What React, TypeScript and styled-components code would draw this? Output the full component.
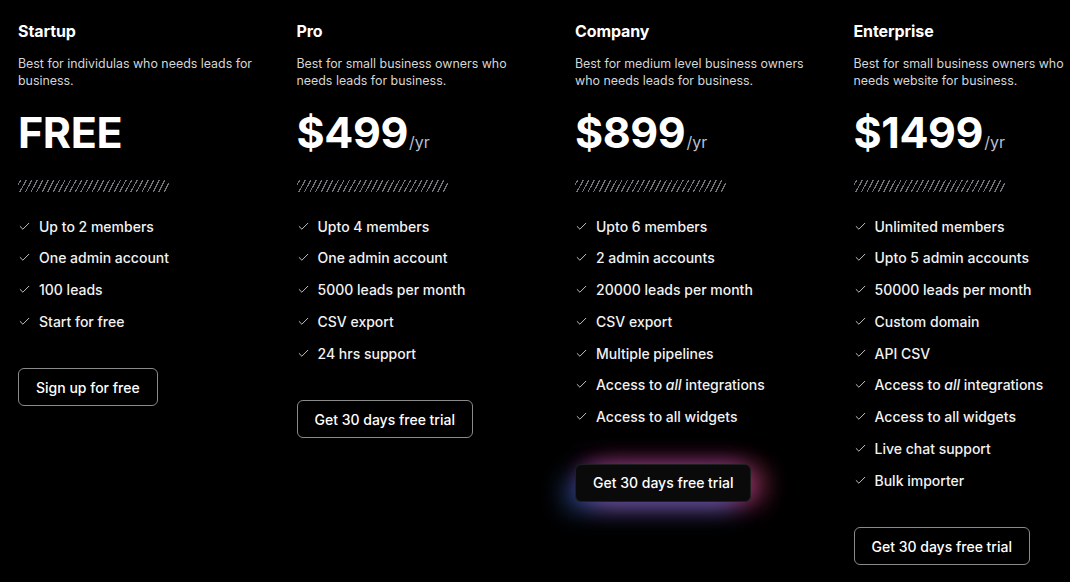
import React from "react";
import styled, { createGlobalStyle, css } from "styled-components";
import { Check } from "lucide-react";

const GlobalStyle = createGlobalStyle`
  html, body {
    margin: 0;
    background: #000;
    overflow: hidden;
  }
  body {
    font-family: Inter, "Noto Sans", sans-serif;
    color: #fff;
    -webkit-font-smoothing: antialiased;
  }
`;

interface Feature {
  text: string;
  italic?: string;
}

interface Plan {
  name: string;
  desc: string;
  price: string;
  period?: string;
  features: Feature[];
  cta: string;
  highlight?: boolean;
}

const plans: Plan[] = [
  {
    name: "Startup",
    desc: "Best for individulas who needs leads for business.",
    price: "FREE",
    features: [
      { text: "Up to 2 members" },
      { text: "One admin account" },
      { text: "100 leads" },
      { text: "Start for free" },
    ],
    cta: "Sign up for free",
  },
  {
    name: "Pro",
    desc: "Best for small business owners who needs leads for business.",
    price: "$499",
    period: "/yr",
    features: [
      { text: "Upto 4 members" },
      { text: "One admin account" },
      { text: "5000 leads per month" },
      { text: "CSV export" },
      { text: "24 hrs support" },
    ],
    cta: "Get 30 days free trial",
  },
  {
    name: "Company",
    desc: "Best for medium level business owners who needs leads for business.",
    price: "$899",
    period: "/yr",
    features: [
      { text: "Upto 6 members" },
      { text: "2 admin accounts" },
      { text: "20000 leads per month" },
      { text: "CSV export" },
      { text: "Multiple pipelines" },
      { text: "Access to |all| integrations", italic: "all" },
      { text: "Access to all widgets" },
    ],
    cta: "Get 30 days free trial",
    highlight: true,
  },
  {
    name: "Enterprise",
    desc: "Best for small business owners who needs website for business.",
    price: "$1499",
    period: "/yr",
    features: [
      { text: "Unlimited members" },
      { text: "Upto 5 admin accounts" },
      { text: "50000 leads per month" },
      { text: "Custom domain" },
      { text: "API CSV" },
      { text: "Access to |all| integrations", italic: "all" },
      { text: "Access to all widgets" },
      { text: "Live chat support" },
      { text: "Bulk importer" },
    ],
    cta: "Get 30 days free trial",
  },
];

const Grid = styled.div`
  display: grid;
  grid-template-columns: repeat(4, 250px);
  column-gap: 28.5px;
  padding: 20px 0 0 18px;
  width: max-content;
`;

const Column = styled.section`
  display: flex;
  flex-direction: column;
  align-items: flex-start;
`;

const Name = styled.h3`
  margin: 0;
  font-size: 16px;
  line-height: 22px;
  font-weight: 700;
  letter-spacing: -0.1px;
`;

const Desc = styled.p`
  margin: 13px 0 0;
  max-width: 236px;
  font-size: 12.4px;
  line-height: 17px;
  color: #d6d6d6;
`;

const PriceRow = styled.div`
  display: flex;
  align-items: baseline;
  margin-top: 13px;
  height: 60px;
`;

const Amount = styled.span`
  font-size: 43px;
  line-height: 60px;
  font-weight: 700;
  letter-spacing: -0.4px;
`;

const Period = styled.span`
  font-size: 16px;
  color: #b8bfd3;
  margin-left: 1px;
`;

const Hatch = styled.div`
  margin-top: 18px;
  width: 151px;
  height: 12px;
  background: repeating-linear-gradient(
    -62deg,
    transparent 0px,
    transparent 3.7px,
    #737378 3.7px,
    #737378 4.9px
  );
`;

const List = styled.ul`
  list-style: none;
  margin: 24px 0 0;
  padding: 0;
  display: flex;
  flex-direction: column;
  gap: 11.75px;
`;

const Item = styled.li`
  display: flex;
  align-items: center;
  gap: 8px;
  height: 20px;
  font-size: 14px;
  font-weight: 500;
  color: #f2f2f2;

  svg {
    flex-shrink: 0;
    color: #e0e0e0;
  }

  em {
    font-style: italic;
  }
`;

const Button = styled.button<{ $glow?: boolean }>`
  position: relative;
  margin-top: 37px;
  height: 38px;
  padding: 0 17px;
  border-radius: 6px;
  border: 1px solid #8a8a8a;
  background: #000;
  color: #fff;
  font-family: inherit;
  font-size: 14px;
  font-weight: 500;
  cursor: pointer;

  ${({ $glow }) =>
    $glow &&
    css`
      border-color: #1f1f22;
      background: #0a0a0b;
      box-shadow: -12px 10px 26px -4px rgba(70, 120, 230, 0.6),
        12px 6px 26px -4px rgba(220, 60, 150, 0.55),
        0 -8px 24px -6px rgba(190, 60, 170, 0.5),
        18px -2px 28px -6px rgba(240, 110, 110, 0.4);
    `}
`;

const renderText = (f: Feature) => {
  if (!f.italic) return f.text;
  const [a, b, c] = f.text.split("|");
  return (
    <>
      {a}
      <em>{b}</em>
      {c}
    </>
  );
};

const PlanColumn = ({ plan }: { plan: Plan }) => (
  <Column>
    <Name>{plan.name}</Name>
    <Desc>{plan.desc}</Desc>
    <PriceRow>
      <Amount>{plan.price}</Amount>
      {plan.period && <Period>{plan.period}</Period>}
    </PriceRow>
    <Hatch />
    <List>
      {plan.features.map((f) => (
        <Item key={f.text}>
          <Check size={13} strokeWidth={1.6} />
          <span>{renderText(f)}</span>
        </Item>
      ))}
    </List>
    <Button $glow={plan.highlight}>{plan.cta}</Button>
  </Column>
);

export default function App() {
  return (
    <>
      <GlobalStyle />
      <Grid>
        {plans.map((p) => (
          <PlanColumn key={p.name} plan={p} />
        ))}
      </Grid>
    </>
  );
}
